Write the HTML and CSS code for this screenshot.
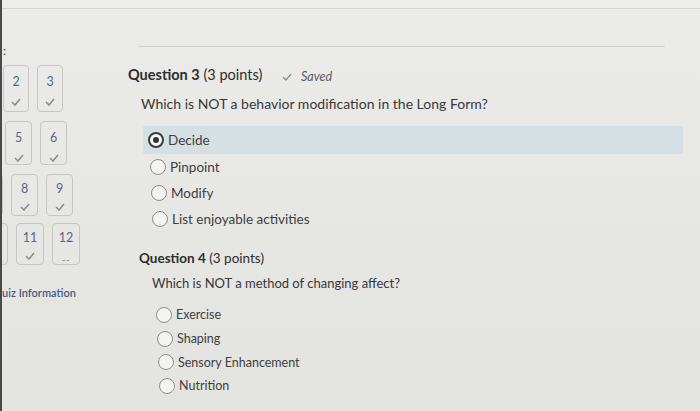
FILE: index.html
```html
<!DOCTYPE html>
<html>
<head>
<meta charset="utf-8">
<link rel="stylesheet" href="styles.css">
</head>
<body>
<div class="screen">
  <div class="topbar"></div>
  <div class="page">
    <aside class="sidebar">
      <div class="colon">:</div>
      <div class="tiles">
        <div class="tile-row row1">
          <div class="tile"><span class="num">2</span><svg class="tick" viewBox="0 0 10 8"><polyline points="1,4 4,7 9,1"/></svg></div>
          <div class="tile"><span class="num">3</span><svg class="tick" viewBox="0 0 10 8"><polyline points="1,4 4,7 9,1"/></svg></div>
        </div>
        <div class="tile-row row2">
          <div class="tile"><span class="num">5</span><svg class="tick" viewBox="0 0 10 8"><polyline points="1,4 4,7 9,1"/></svg></div>
          <div class="tile"><span class="num">6</span><svg class="tick" viewBox="0 0 10 8"><polyline points="1,4 4,7 9,1"/></svg></div>
        </div>
        <div class="tile-row row3">
          <div class="tile partial"></div>
          <div class="tile"><span class="num">8</span><svg class="tick" viewBox="0 0 10 8"><polyline points="1,4 4,7 9,1"/></svg></div>
          <div class="tile"><span class="num">9</span><svg class="tick" viewBox="0 0 10 8"><polyline points="1,4 4,7 9,1"/></svg></div>
        </div>
        <div class="tile-row row4">
          <div class="tile partial"></div>
          <div class="tile"><span class="num">11</span><svg class="tick" viewBox="0 0 10 8"><polyline points="1,4 4,7 9,1"/></svg></div>
          <div class="tile"><span class="num">12</span><span class="dash">--</span></div>
        </div>
      </div>
      <div class="quiz-info">uiz Information</div>
    </aside>
    <main class="main">
      <div class="rule"></div>
      <section class="question q3">
        <h2 class="q-head"><b>Question 3</b> (3 points) <svg class="saved-tick" viewBox="0 0 10 8"><polyline points="1,4 4,7 9,1"/></svg><i class="saved">Saved</i></h2>
        <p class="prompt">Which is NOT a behavior modification in the Long Form?</p>
        <ul class="options">
          <li class="opt selected o1"><span class="radio on"></span>Decide</li>
          <li class="opt o2"><span class="radio"></span>Pinpoint</li>
          <li class="opt o3"><span class="radio"></span>Modify</li>
          <li class="opt o4"><span class="radio"></span>List enjoyable activities</li>
        </ul>
      </section>
      <section class="question q4">
        <h2 class="q-head"><b>Question 4</b> (3 points)</h2>
        <p class="prompt">Which is NOT a method of changing affect?</p>
        <ul class="options">
          <li class="opt o1"><span class="radio"></span>Exercise</li>
          <li class="opt o2"><span class="radio"></span>Shaping</li>
          <li class="opt o3"><span class="radio"></span>Sensory Enhancement</li>
          <li class="opt o4"><span class="radio"></span>Nutrition</li>
        </ul>
      </section>
    </main>
  </div>
</div>
</body>
</html>
```
FILE: styles.css
```css
* { box-sizing: border-box; }
html, body { margin: 0; padding: 0; }
body {
  width: 700px;
  height: 411px;
  overflow: hidden;
  background: #e6e6e3;
  font-family: Lato, "Open Sans", sans-serif;
  color: #3a3a3a;
}
.screen {
  height: 411px;
  border-left: 2px solid #4a4a4a;
  background: linear-gradient(180deg, #ebebe9 0%, #e6e6e3 60%, #e3e3e0 100%);
}
.topbar {
  height: 9px;
  background: #eeeeec;
  border-bottom: 1px solid #d3d3cf;
}
.page { display: flex; }
.sidebar {
  width: 98px;
  flex: none;
  overflow: hidden;
}
.colon {
  font-size: 12px;
  line-height: 14px;
  margin: 35px 0 0 1px;
  color: #333;
}
.tiles {
  display: flex;
  flex-direction: column;
  margin-top: 7px;
}
.tile-row { display: flex; gap: 8px; }
.tile {
  width: 26px;
  height: 46px;
  border: 1px solid #c6c6c3;
  border-radius: 4px;
  display: flex;
  flex-direction: column;
  align-items: center;
  flex: none;
}
.num {
  font-size: 12.5px;
  line-height: 14px;
  margin-top: 9px;
  color: #57678a;
}
.tick {
  width: 10px;
  height: 8px;
  margin-top: 9px;
  fill: none;
  stroke: #8a8a8a;
  stroke-width: 1.5;
}
.dash {
  font-size: 10px;
  line-height: 10px;
  margin-top: 9px;
  color: #8c8c8c;
  letter-spacing: 0.5px;
}
.row1 { padding-left: 1px; }
.row1 .tile { height: 47px; }
.row2 { margin-top: 9px; padding-left: 3px; }
.row2 .tile { height: 44px; width: 27px; }
.row3 { margin-top: 9px; margin-left: -26px; }
.row3 .tile { height: 42px; width: 27px; }
.row4 { margin-top: 7px; margin-left: -22px; }
.row4 .tile { height: 42px; width: 28px; }
.row3 .num, .row4 .num { margin-top: 7px; }
.row3 .tick, .row4 .tick { margin-top: 7px; }
.quiz-info {
  margin: 21px 0 0 0;
  font-size: 11px;
  font-weight: 600;
  color: #4b5b7c;
  white-space: nowrap;
}
.main { flex: 1; }
.rule {
  margin: 37px 0 0 38px;
  width: 527px;
  border-top: 1px solid #d2d2ce;
}
.question { margin: 0; }
.q-head {
  margin: 0;
  height: 20px;
  font-size: 14.5px;
  font-weight: 400;
  line-height: 20px;
  color: #2e2e2e;
  display: flex;
  align-items: center;
  white-space: pre;
}
.q-head b { font-weight: 700; }
.saved-tick {
  width: 10px;
  height: 8px;
  margin: 3px 0 0 16px;
  fill: none;
  stroke: #8a8a8a;
  stroke-width: 1.2;
}
.saved {
  margin: 4px 0 0 9px;
  font-size: 12.5px;
  color: #5c5c5c;
}
.prompt {
  margin: 0;
  font-size: 14px;
  line-height: 20px;
  color: #383838;
}
.options { list-style: none; margin: 0; padding: 0; }
.opt {
  display: flex;
  align-items: center;
  font-size: 13.5px;
  color: #404040;
}
.radio {
  width: 16px;
  height: 16px;
  border: 1px solid #8e8e8e;
  border-radius: 50%;
  background: #f3f3f1;
  margin-right: 4px;
  flex: none;
  display: flex;
  align-items: center;
  justify-content: center;
}
.radio.on {
  border: 2px solid #3c3c3c;
  background: #f6f6f4;
}
.radio.on::after {
  content: "";
  width: 6px;
  height: 6px;
  border-radius: 50%;
  background: #333;
}
.q3 .q-head { margin: 18px 0 0 28px; }
.q3 .prompt { margin: 9px 0 0 41px; }
.q3 .options { margin: 12px 0 0 43px; width: 540px; }
.q3 .opt { height: 26px; }
.q3 .opt.selected { height: 28px; background: #d5dfe4; }
.q3 .o1 { padding-left: 5px; }
.q3 .o2 { padding-left: 7px; }
.q3 .o3 { padding-left: 8px; }
.q3 .o4 { padding-left: 9px; }
.q4 .q-head { margin: 16px 0 0 39px; font-size: 13.5px; }
.q4 .prompt { margin: 5px 0 0 52px; font-size: 13px; }
.q4 .options { margin: 10px 0 0 56px; }
.q4 .opt { height: 23.7px; font-size: 12.5px; }
.q4 .o2 { padding-left: 1px; }
.q4 .o3 { padding-left: 2px; }
.q4 .o4 { padding-left: 3px; }
```
